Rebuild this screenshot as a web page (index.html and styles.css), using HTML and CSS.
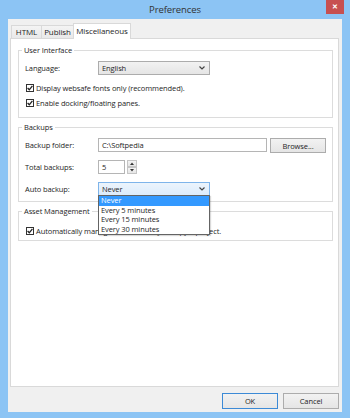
FILE: index.html
```html
<!DOCTYPE html>
<html lang="en">
<head>
    <meta charset="UTF-8">
    <title>Preferences</title>
    <link rel="stylesheet" href="styles.css">
</head>
<body>

<div class="window">
    <div class="titlebar">
        <span class="title">Preferences</span>
        <span class="close">&#x2715;</span>
    </div>

    <div class="client">
        <div class="tabs">
            <div class="tab">HTML</div>
            <div class="tab">Publish</div>
            <div class="tab active">Miscellaneous</div>
        </div>

        <div class="panel">
            <fieldset class="group group-ui">
                <legend>User Interface</legend>
                <div class="row first">
                    <span class="field-label">Language:</span>
                    <div class="select">
                        <span>English</span>
                        <svg class="chevron" width="6" height="4" viewBox="0 0 6 4"><path d="M0.5 0.5 L3 3 L5.5 0.5" fill="none" stroke="#444" stroke-width="1.2"/></svg>
                    </div>
                </div>
                <div class="check-row">
                    <span class="box"><svg width="6" height="6" viewBox="0 0 6 6"><path d="M0.6 3 L2.3 4.8 L5.4 0.8" fill="none" stroke="#222" stroke-width="1.3"/></svg></span>
                    <span>Display websafe fonts only (recommended).</span>
                </div>
                <div class="check-row">
                    <span class="box"><svg width="6" height="6" viewBox="0 0 6 6"><path d="M0.6 3 L2.3 4.8 L5.4 0.8" fill="none" stroke="#222" stroke-width="1.3"/></svg></span>
                    <span>Enable docking/floating panes.</span>
                </div>
            </fieldset>

            <fieldset class="group group-backups">
                <legend>Backups</legend>
                <div class="row first">
                    <span class="field-label">Backup folder:</span>
                    <div class="input wide">C:\Softpedia</div>
                    <div class="button browse">Browse...</div>
                </div>
                <div class="row">
                    <span class="field-label">Total backups:</span>
                    <div class="input short">5</div>
                    <div class="spinner">
                        <span class="spin"><svg width="4" height="3" viewBox="0 0 4 3"><path d="M0 3 L2 0.5 L4 3 Z" fill="#333"/></svg></span>
                        <span class="spin"><svg width="4" height="3" viewBox="0 0 4 3"><path d="M0 0 L2 2.5 L4 0 Z" fill="#333"/></svg></span>
                    </div>
                </div>
                <div class="row">
                    <span class="field-label">Auto backup:</span>
                    <div class="select open">
                        <span>Never</span>
                        <svg class="chevron" width="6" height="4" viewBox="0 0 6 4"><path d="M0.5 0.5 L3 3 L5.5 0.5" fill="none" stroke="#444" stroke-width="1.2"/></svg>
                        <ul class="dropdown">
                            <li class="selected">Never</li>
                            <li>Every 5 minutes</li>
                            <li>Every 15 minutes</li>
                            <li>Every 30 minutes</li>
                        </ul>
                    </div>
                </div>
            </fieldset>

            <fieldset class="group group-assets">
                <legend>Asset Management</legend>
                <div class="check-row first">
                    <span class="box"><svg width="6" height="6" viewBox="0 0 6 6"><path d="M0.6 3 L2.3 4.8 L5.4 0.8" fill="none" stroke="#222" stroke-width="1.3"/></svg></span>
                    <span>Automatically manage assets when you copy a project.</span>
                </div>
            </fieldset>
        </div>

        <div class="buttons">
            <div class="button default">OK</div>
            <div class="button">Cancel</div>
        </div>
    </div>
</div>

</body>
</html>
```

FILE: styles.css
```css
body {
    margin: 0;
    font-family: "Open Sans", "Noto Sans", sans-serif;
    font-size: 7.5px;
    letter-spacing: -0.1px;
    color: #1e1e1e;
}
.window {
    width: 350px;
    height: 418px;
    background-color: #8cc4f4;
    display: flex;
    flex-direction: column;
}
.titlebar {
    height: 19px;
    display: grid;
    grid-template-columns: 1fr auto 1fr;
    align-items: start;
}
.title {
    grid-column: 2;
    font-size: 9.5px;
    line-height: 20px;
    color: #333;
}
.close {
    grid-column: 3;
    justify-self: end;
    margin-right: 6px;
    width: 18px;
    height: 14px;
    background-color: #c75050;
    color: #fff;
    font-size: 7px;
    font-weight: bold;
    line-height: 14px;
    text-align: center;
}
.client {
    margin: 0 8px;
    height: 393px;
    background-color: #f0f0f0;
    padding: 4px 3px 0 2px;
    box-sizing: border-box;
}
.tabs {
    display: flex;
    align-items: flex-end;
    height: 15px;
    margin-left: 1px;
}
.tab {
    height: 13px;
    box-sizing: border-box;
    border: 1px solid #d9d9d9;
    border-bottom: none;
    background: linear-gradient(#f4f4f4, #e9e9e9);
    text-align: center;
    line-height: 12px;
    margin-right: -1px;
    font-size: 8px;
}
.tab:nth-child(1) { width: 31px; }
.tab:nth-child(2) { width: 33px; }
.tab.active {
    width: 58px;
    height: 16px;
    margin-bottom: -1px;
    background: #fff;
    position: relative;
    z-index: 1;
    line-height: 14px;
}
.panel {
    height: 349px;
    box-sizing: border-box;
    background-color: #fff;
    border: 1px solid #d9d9d9;
    padding-top: 5px;
}
.group {
    margin: 0 5px 0 7px;
    padding: 0 6px;
    border: 1px solid #dcdcdc;
    box-sizing: border-box;
}
.group legend {
    margin-left: -3px;
    padding: 0 2px;
    line-height: 12px;
}
.group-ui { height: 74px; }
.group-backups { height: 81px; margin-top: 3px; }
.group-assets { height: 36px; margin-top: 3px; }
.row {
    display: flex;
    align-items: center;
    height: 14px;
    margin-top: 8px;
}
.row.first { margin-top: 5px; }
.field-label {
    width: 73px;
    flex: none;
}
.select {
    position: relative;
    width: 112px;
    height: 14px;
    box-sizing: border-box;
    border: 1px solid #acacac;
    background: linear-gradient(#f2f2f2, #e5e5e5);
    display: flex;
    align-items: center;
    justify-content: space-between;
    padding: 0 4px 0 3px;
}
.select.open {
    border-color: #7eb4ea;
    background: linear-gradient(#ecf4fc, #dcecfc);
}
.chevron { display: block; }
.dropdown {
    position: absolute;
    top: 12px;
    left: -1px;
    width: 112px;
    margin: 0;
    padding: 0;
    list-style: none;
    background-color: #fff;
    border: 1px solid #646464;
    box-sizing: border-box;
    box-shadow: 1px 1px 1px rgba(0, 0, 0, 0.15);
    z-index: 2;
}
.dropdown li {
    height: 9.5px;
    line-height: 9.5px;
    padding-left: 2px;
}
.dropdown li.selected {
    background-color: #3399ff;
    color: #fff;
}
.check-row {
    display: flex;
    align-items: center;
    height: 15px;
    margin-left: 1px;
}
.check-row.first { margin-top: 6px; }
.group-ui .check-row:nth-of-type(2) { margin-top: 5px; }
.box {
    width: 8px;
    height: 8px;
    box-sizing: border-box;
    border: 1px solid #333;
    background-color: #fff;
    margin-right: 2px;
    display: flex;
    align-items: center;
    justify-content: center;
    flex: none;
}
.box svg { display: block; }
.input {
    height: 14px;
    box-sizing: border-box;
    border: 1px solid #b5b5b5;
    background-color: #fff;
    padding-left: 3px;
    line-height: 12px;
}
.input.wide { width: 169px; }
.input.short { width: 27px; }
.button {
    width: 56px;
    height: 16px;
    box-sizing: border-box;
    border: 1px solid #acacac;
    background: linear-gradient(#f2f2f2, #e5e5e5);
    text-align: center;
    line-height: 14px;
}
.button.browse {
    margin-left: 3px;
    height: 15px;
}
.button.default { border-color: #3c8ad6; }
.spinner {
    display: flex;
    flex-direction: column;
    margin-left: 2px;
    height: 14px;
}
.spin {
    width: 10px;
    height: 7px;
    box-sizing: border-box;
    border: 1px solid #c5c5c5;
    background: linear-gradient(#f4f4f4, #e6e6e6);
    display: flex;
    align-items: center;
    justify-content: center;
}
.spin svg { display: block; }
.buttons {
    display: flex;
    justify-content: flex-end;
    gap: 5px;
    margin-top: 6px;
}
```
